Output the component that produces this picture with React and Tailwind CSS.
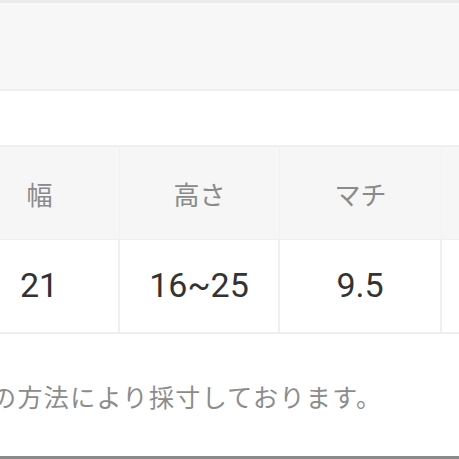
import React from "react";

const cols = [
  { label: "幅", value: "21" },
  { label: "高さ", value: "16~25" },
  { label: "マチ", value: "9.5" },
  { label: "", value: "" },
];

const App = () => {
  return (
    <div
      className="w-[459px] h-[459px] overflow-hidden bg-white flex flex-col"
      style={{ fontFamily: '"Noto Sans CJK JP", "Noto Sans", sans-serif' }}
    >
      <div className="h-[3px] bg-[#ebebeb] shrink-0" />
      <div className="h-[86px] bg-[#f7f7f7] shrink-0" />
      <div className="h-[2px] bg-[#eeeeee] shrink-0" />
      <div className="h-[54px] bg-white shrink-0" />

      {/* size table */}
      <div className="ml-[-40px] w-[660px] shrink-0">
        <div className="grid grid-cols-[160px_160px_162px_178px] h-[95px] bg-[#f6f6f6] border-t-2 border-b border-[#efefef]">
          {cols.map((c, i) => (
            <div
              key={i}
              className="flex items-center justify-center border-r border-[#f1f1f1] text-[26px] text-[#8a8a8a]"
            >
              {c.label}
            </div>
          ))}
        </div>
        <div className="grid grid-cols-[160px_160px_162px_178px] h-[94px] bg-white border-b-2 border-[#eeeeee]">
          {cols.map((c, i) => (
            <div
              key={i}
              className="flex items-center justify-center border-r-2 border-[#efefef] text-[34px] text-[#333333] pb-[2px]"
              style={{ fontFamily: 'Roboto, "Noto Sans CJK JP", sans-serif' }}
            >
              {c.value}
            </div>
          ))}
        </div>
      </div>

      <div className="flex-1 flex items-center pt-[4px]">
        <p className="ml-[-9px] text-[25px] tracking-[1.4px] text-[#8c8c8c] whitespace-nowrap">
          の方法により採寸しております。
        </p>
      </div>
      <div className="h-[3px] bg-[#8a8a8a] shrink-0" />
    </div>
  );
};

export default App;
